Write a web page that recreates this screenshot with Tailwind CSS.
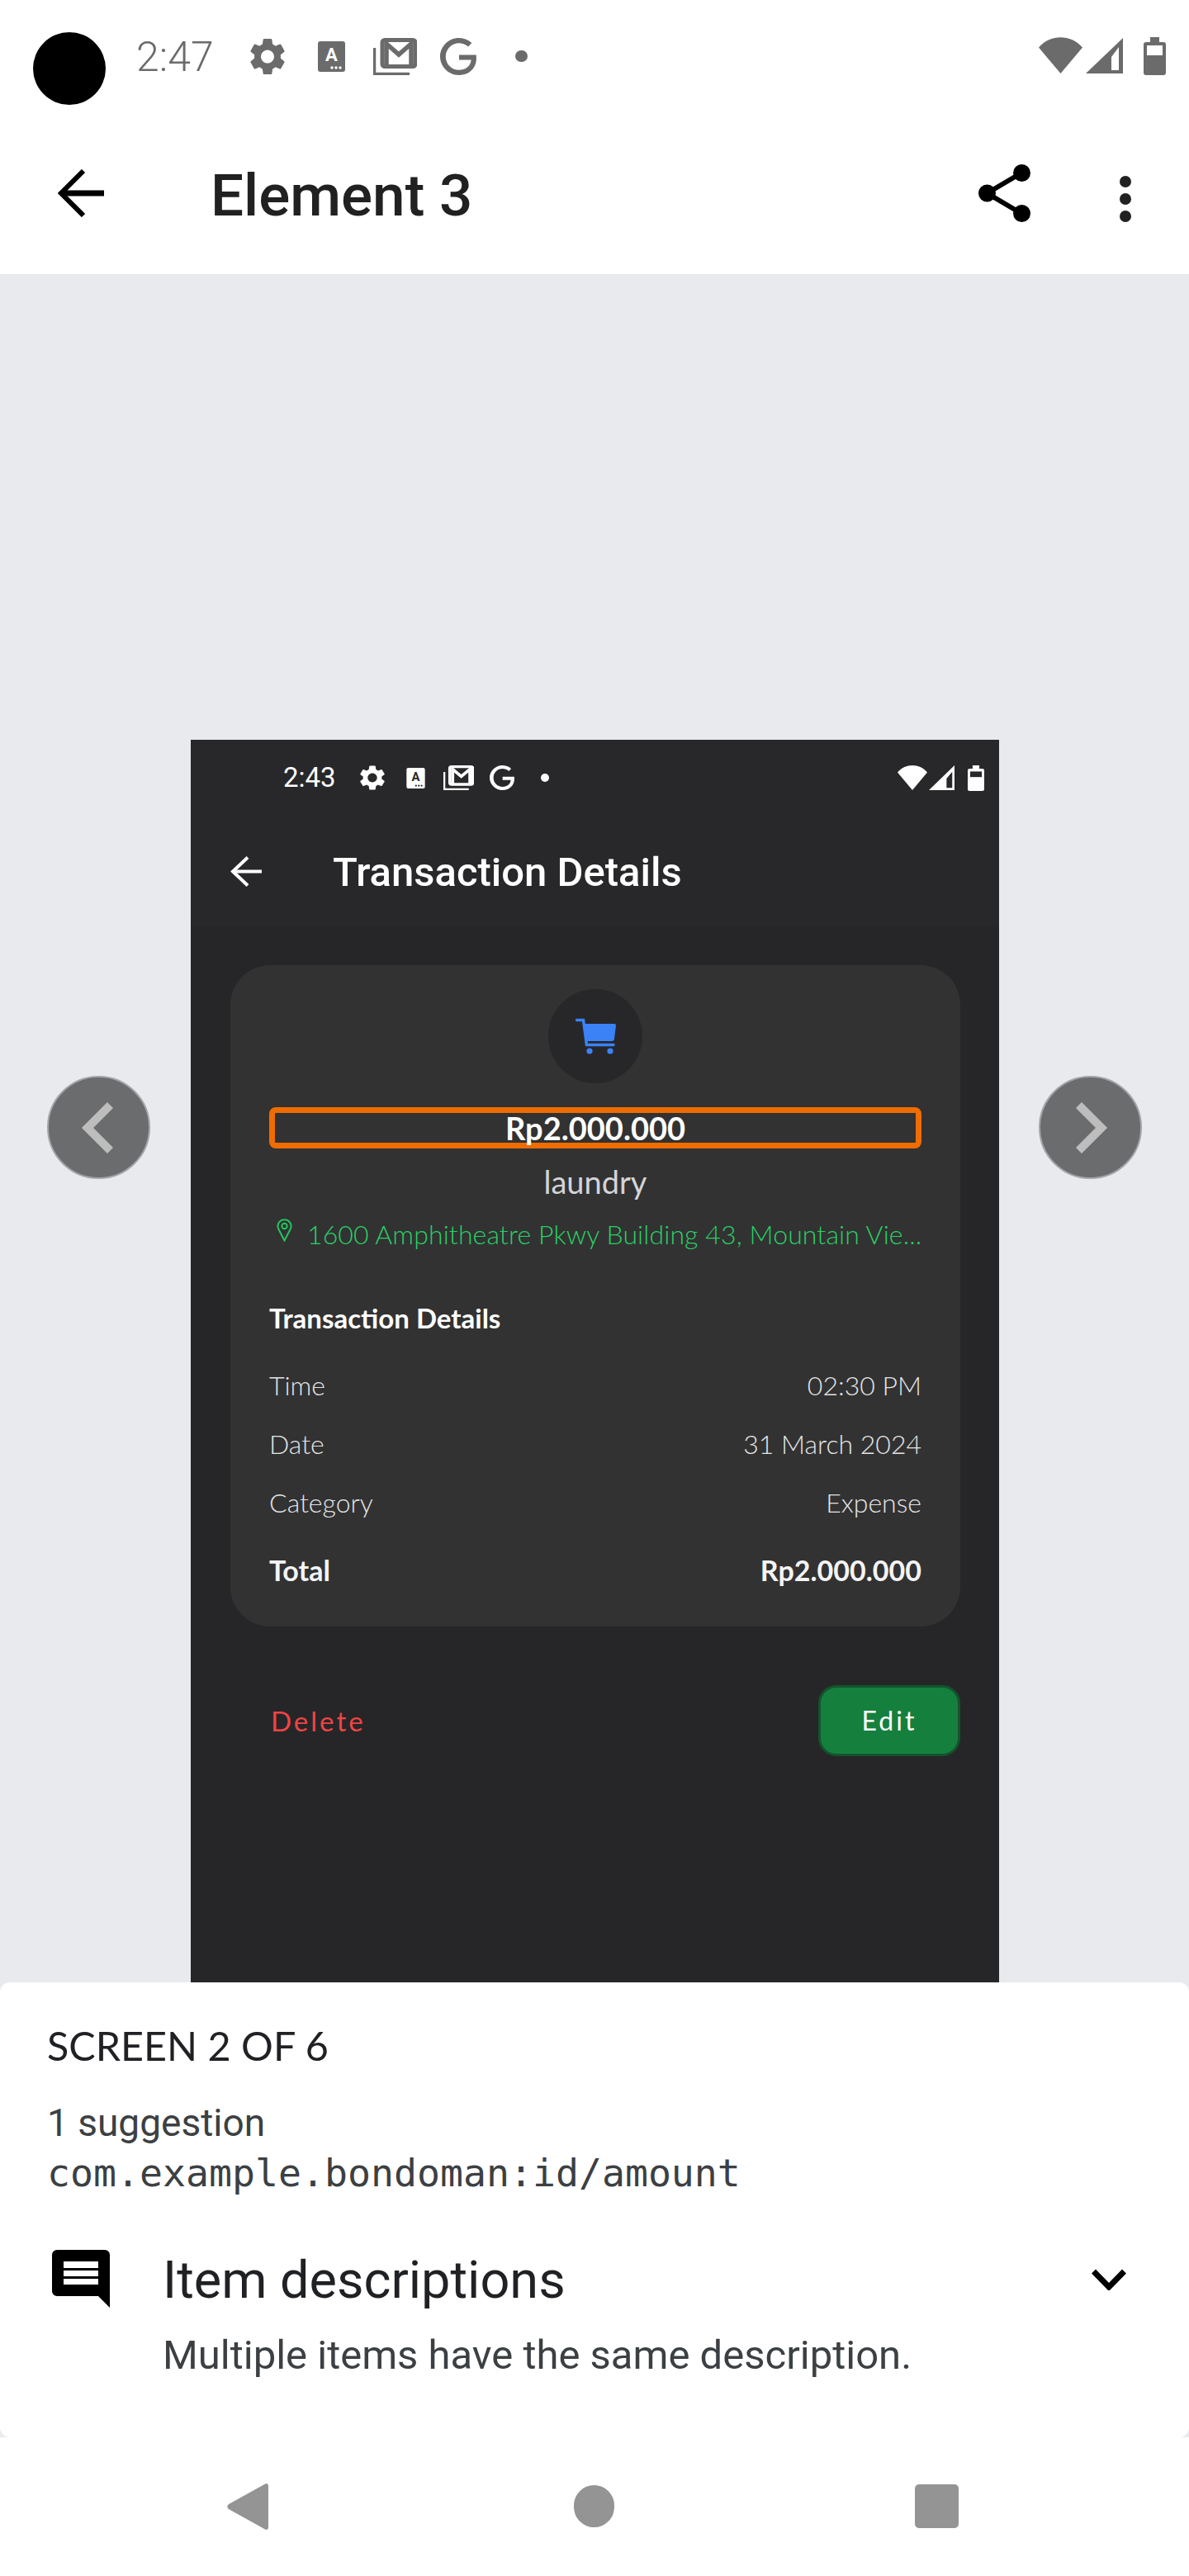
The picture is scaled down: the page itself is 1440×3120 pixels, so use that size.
<!DOCTYPE html>
<html lang="en">
<head>
<meta charset="utf-8">
<title>Element 3</title>
<script src="https://cdn.jsdelivr.net/npm/@tailwindcss/browser@4"></script>
</head>
<body class="m-0 bg-white">
<div class="w-[1440px] h-[3120px] flex flex-col overflow-hidden bg-white font-[Roboto,sans-serif]">

  <!-- Device status bar -->
  <header class="h-[332px] shrink-0 flex flex-col bg-white">
    <div class="h-[127px] flex items-start pl-[40px] pr-[28px]">
      <div class="w-[88px] h-[88px] mt-[39px] rounded-full bg-black"></div>
      <span class="ml-[37px] mt-[41px] text-[50px] leading-[56px] font-light text-[#6b6b6b]">2:47</span>
      <svg class="ml-[44px] mt-[46px] w-[42px] h-[45px]" viewBox="2.5 2 19 20" preserveAspectRatio="none" fill="#6b6b6b"><path d="M19.14 12.94c.04-.3.06-.61.06-.94 0-.32-.02-.64-.07-.94l2.03-1.58c.18-.14.23-.41.12-.61l-1.92-3.32c-.12-.22-.37-.29-.59-.22l-2.39.96c-.5-.38-1.03-.7-1.62-.94l-.36-2.54c-.04-.24-.24-.41-.48-.41h-3.84c-.24 0-.43.17-.47.41l-.36 2.54c-.59.24-1.13.57-1.62.94l-2.39-.96c-.22-.08-.47 0-.59.22L2.74 8.87c-.12.21-.08.47.12.61l2.03 1.58c-.05.3-.09.63-.09.94s.02.64.07.94l-2.03 1.58c-.18.14-.23.41-.12.61l1.92 3.32c.12.22.37.29.59.22l2.39-.96c.5.38 1.03.7 1.62.94l.36 2.54c.05.24.24.41.48.41h3.84c.24 0 .44-.17.47-.41l.36-2.54c.59-.24 1.13-.56 1.62-.94l2.39.96c.22.08.47 0 .59-.22l1.92-3.32c.12-.22.07-.47-.12-.61l-2.01-1.58zM12 15.6c-1.98 0-3.6-1.62-3.6-3.6s1.62-3.6 3.6-3.6 3.6 1.62 3.6 3.6-1.62 3.6-3.6 3.6z"/></svg>
      <svg class="ml-[40px] mt-[50px] w-[33px] h-[37px]" viewBox="0 0 33 37"><rect width="33" height="37" rx="3" fill="#6b6b6b"/><text x="16.500" y="24" text-anchor="middle" font-family="Roboto" font-weight="700" font-size="22" fill="#fff">A</text><circle cx="17" cy="32" r="1.700" fill="#fff"/><circle cx="22" cy="32" r="1.700" fill="#fff"/><circle cx="27" cy="32" r="1.700" fill="#fff"/></svg>
      <svg class="ml-[34px] mt-[46px] w-[53px] h-[45px]" viewBox="0 0 53 45" fill="none" stroke="#6b6b6b"><path d="M1.500 12V43.500H44" stroke-width="3.500"/><rect x="11" y="2.500" width="40" height="32" rx="3" stroke-width="5"/><path d="M16 33V7L31 20L46 7V33" stroke-width="5.500"/></svg>
      <svg class="ml-[28px] mt-[46px] w-[44px] h-[45px]" viewBox="2 2 19.500 20" preserveAspectRatio="none" fill="#6b6b6b"><path d="M21.350 11.100h-9.170v2.730h6.510c-.33 3.810-3.500 5.440-6.500 5.440C8.360 19.270 5 16.250 5 12c0-4.100 3.200-7.270 7.200-7.270 3.090 0 4.900 1.970 4.900 1.970L19 4.720S16.560 2 12.100 2C6.420 2 2 6.800 2 12c0 5.050 4.130 10 10.220 10 5.350 0 9.250-3.670 9.250-9.090 0-1.150-.12-1.810-.12-1.810z"/></svg>
      <div class="ml-[47px] mt-[61px] w-[15px] h-[14px] rounded-full bg-[#6b6b6b]"></div>
      <svg class="ml-auto mt-[45px] w-[53px] h-[44px]" viewBox="0 0 53 44" fill="#6b6b6b"><path d="M0 12.500C14-4 39-4 53 12.500L26.500 44Z"/></svg>
      <svg class="ml-[4px] mt-[46px] w-[45px] h-[43px]" viewBox="0 0 45 43"><path d="M45 0V43H0Z" fill="#6b6b6b"/><path d="M31 39H40V11L31 23Z" fill="#fff"/></svg>
      <svg class="ml-[25px] mt-[45px] w-[27px] h-[46px]" viewBox="0 0 27 46"><path d="M8 0H19V6H24A3 3 0 0 1 27 9V43A3 3 0 0 1 24 46H3A3 3 0 0 1 0 43V9A3 3 0 0 1 3 6H8Z" fill="#6b6b6b"/><rect x="4" y="10" width="19" height="12" fill="#fff"/></svg>
    </div>
    <!-- Toolbar -->
    <div class="h-[205px] flex items-start pl-[70px] pr-[70px]">
      <svg class="mt-[78px] w-[56px] h-[58px]" viewBox="0 0 56 58" fill="none" stroke="#000" stroke-width="7"><path d="M56 29H5"/><path d="M31 2L4 29L31 56" stroke-width="6"/></svg>
      <h1 class="ml-[129px] mt-[71px] text-[71px] leading-[78px] font-medium text-[#212121]">Element 3</h1>
      <svg class="ml-auto mt-[72px] w-[63px] h-[70px]" viewBox="0 0 63 70" fill="#000" stroke="#000"><path d="M52 10.500L10.500 35L52 59.500" fill="none" stroke-width="6"/><ellipse cx="10.500" cy="35" rx="10.500" ry="10.500" stroke="none"/><ellipse cx="52.500" cy="10.500" rx="10.500" ry="10.500" stroke="none"/><ellipse cx="52.500" cy="59.500" rx="10.500" ry="10.500" stroke="none"/></svg>
      <div class="ml-[108px] mt-[86px] flex flex-col gap-[7px]">
        <div class="w-[14px] h-[14px] rounded-full bg-[#212121]"></div>
        <div class="w-[14px] h-[14px] rounded-full bg-[#212121]"></div>
        <div class="w-[14px] h-[14px] rounded-full bg-[#212121]"></div>
      </div>
    </div>
  </header>

  <div class="flex-1 min-h-0 flex flex-col bg-[#e8eaed]">
    <!-- Preview row -->
    <main class="h-[2069px] shrink-0 flex items-start pl-[57px] overflow-hidden">
      <button class="w-[125px] h-[125px] mt-[971px] shrink-0 flex items-center justify-center rounded-full border-2 border-[#a2a5a9] bg-[#6b6c6e]">
        <svg class="mr-[4px] w-[39px] h-[62px]" viewBox="0 0 39 62" fill="none" stroke="#bdbdbd" stroke-width="10"><path d="M35.500 3.500L8 31L35.500 58.500"/></svg>
      </button>

      <section class="w-[979px] h-[1505px] mt-[564px] ml-[49px] shrink-0 flex flex-col bg-[#262628] font-[Lato,sans-serif]">
        <!-- Inner status + app bar -->
        <div class="h-[226px] shrink-0 flex flex-col bg-[#28282a]">
          <div class="h-[72px] flex items-start pl-[112px] pr-[18px] font-[Roboto,sans-serif]">
            <span class="mt-[27px] text-[33px] leading-[38px] text-white">2:43</span>
            <svg class="ml-[29px] mt-[31px] w-[30px] h-[30px]" viewBox="2.500 2 19 20" preserveAspectRatio="none" fill="#fff"><path d="M19.140 12.940c.04-.3.06-.61.06-.94 0-.32-.02-.64-.07-.94l2.030-1.580c.18-.14.23-.41.12-.61l-1.920-3.320c-.12-.22-.37-.29-.59-.22l-2.390.96c-.5-.38-1.030-.7-1.620-.94l-.36-2.540c-.04-.24-.24-.41-.48-.41h-3.840c-.24 0-.43.17-.47.41l-.36 2.540c-.59.24-1.130.57-1.620.94l-2.390-.96c-.22-.08-.47 0-.59.22L2.740 8.870c-.12.21-.08.47.12.61l2.030 1.580c-.05.3-.09.63-.09.94s.02.64.07.94l-2.030 1.580c-.18.14-.23.41-.12.61l1.920 3.320c.12.22.37.29.59.22l2.390-.96c.5.38 1.030.7 1.620.94l.36 2.54c.05.24.24.41.48.41h3.840c.24 0 .44-.17.47-.41l.36-2.540c.59-.24 1.130-.56 1.620-.94l2.390.96c.22.08.47 0 .59-.22l1.920-3.320c.12-.22.07-.47-.12-.61l-2.010-1.580zM12 15.600c-1.980 0-3.600-1.620-3.600-3.600s1.620-3.600 3.600-3.600 3.600 1.620 3.600 3.600-1.620 3.600-3.600 3.600z"/></svg>
            <svg class="ml-[26px] mt-[34px] w-[23px] h-[25px]" viewBox="0 0 33 37"><rect width="33" height="37" rx="3" fill="#fff"/><text x="16.500" y="24" text-anchor="middle" font-family="Roboto" font-weight="700" font-size="22" fill="#28282a">A</text><circle cx="17" cy="32" r="1.700" fill="#28282a"/><circle cx="22" cy="32" r="1.700" fill="#28282a"/><circle cx="27" cy="32" r="1.700" fill="#28282a"/></svg>
            <svg class="ml-[22px] mt-[31px] w-[37px] h-[30px]" viewBox="0 0 53 45" preserveAspectRatio="none" fill="none" stroke="#fff"><path d="M1.500 12V43.500H44" stroke-width="3.500"/><rect x="11" y="2.500" width="40" height="32" rx="3" stroke-width="5"/><path d="M16 33V7L31 20L46 7V33" stroke-width="5.500"/></svg>
            <svg class="ml-[19px] mt-[31px] w-[30px] h-[30px]" viewBox="2 2 19.500 20" preserveAspectRatio="none" fill="#fff"><path d="M21.350 11.100h-9.170v2.730h6.510c-.33 3.810-3.500 5.440-6.500 5.440C8.360 19.270 5 16.250 5 12c0-4.100 3.200-7.270 7.200-7.270 3.090 0 4.900 1.970 4.900 1.970L19 4.720S16.560 2 12.100 2C6.420 2 2 6.800 2 12c0 5.050 4.130 10 10.220 10 5.350 0 9.250-3.670 9.250-9.090 0-1.150-.12-1.810-.12-1.810z"/></svg>
            <div class="ml-[32px] mt-[41px] w-[10px] h-[10px] rounded-full bg-white"></div>
            <svg class="ml-auto mt-[31px] w-[36px] h-[30px]" viewBox="0 0 53 44" preserveAspectRatio="none" fill="#fff"><path d="M0 12.500C14-4 39-4 53 12.500L26.500 44Z"/></svg>
            <svg class="ml-[2px] mt-[31px] w-[31px] h-[30px]" viewBox="0 0 45 43" preserveAspectRatio="none"><path d="M45 0V43H0Z" fill="#fff"/><path d="M31 39H41V11L31 23Z" fill="#28282a"/></svg>
            <svg class="ml-[16px] mt-[31px] w-[20px] h-[31px]" viewBox="0 0 27 46" preserveAspectRatio="none"><path d="M8 0H19V6H24A3 3 0 0 1 27 9V43A3 3 0 0 1 24 46H3A3 3 0 0 1 0 43V9A3 3 0 0 1 3 6H8Z" fill="#fff"/><rect x="4" y="11" width="19" height="10" fill="#28282a"/></svg>
          </div>
          <div class="flex items-start pl-[48px] font-[Roboto,sans-serif]">
            <svg class="mt-[69px] w-[38px] h-[37px]" viewBox="0 0 38 37" fill="none" stroke="#fff" stroke-width="4"><path d="M38 18.500H3"/><path d="M21 1.500L3 18.500L21 35.500"/></svg>
            <h2 class="ml-[86px] mt-[62px] text-[49px] leading-[54px] font-medium text-white">Transaction Details</h2>
          </div>
        </div>

        <!-- Card -->
        <div class="w-[884px] h-[801px] ml-[48px] mt-[47px] shrink-0 flex flex-col px-[47px] rounded-[48px] bg-[#323232]">
          <div class="w-[114px] h-[114px] mt-[29px] self-center flex items-center justify-center rounded-full bg-[#27272a]">
            <svg class="w-[49px] h-[44px]" viewBox="0 0 49 44"><path d="M1.500 2.500H9.500L13.500 32.500H46" fill="none" stroke="#3b82f6" stroke-width="3.500" stroke-linecap="round"/><path d="M10 7H47A2 2 0 0 1 49 9L47 25A3 3 0 0 1 44 28H13Z" fill="#3b82f6"/><circle cx="17" cy="40" r="3.600" fill="#3b82f6"/><circle cx="42" cy="40" r="3.600" fill="#3b82f6"/></svg>
          </div>
          <div class="w-[790px] h-[50px] mt-[29px] flex items-center justify-center rounded-[8px] border-[7px] border-[#ef6c00] text-[38px] leading-[36px] font-bold text-white">Rp2.000.000</div>
          <p class="mt-[18px] text-center text-[38px] leading-[44px] text-[#d4d4d8]">laundry</p>
          <div class="mt-[22px] flex items-start">
            <svg class="ml-[9px] mt-[1px] w-[19px] h-[28px] shrink-0" viewBox="0 0 19 28" fill="none" stroke="#22c55e" stroke-width="2"><path d="M9.500 26.500L2.500 13A8 8 0 1 1 16.500 13Z"/><circle cx="9.500" cy="9" r="3.200"/></svg>
            <p class="ml-[18px] whitespace-nowrap text-[32px] leading-[40px] tracking-[0.1px] font-light text-[#28d066]">1600 Amphitheatre Pkwy Building 43, Mountain Vie...</p>
          </div>
          <h3 class="mt-[62px] text-[33px] leading-[38px] font-bold text-white">Transaction Details</h3>
          <div class="mt-[44px] flex justify-between text-[32px] leading-[38px] font-light text-[#e4e4e7]"><span>Time</span><span>02:30 PM</span></div>
          <div class="mt-[33px] flex justify-between text-[32px] leading-[38px] font-light text-[#e4e4e7]"><span>Date</span><span>31 March 2024</span></div>
          <div class="mt-[33px] flex justify-between text-[32px] leading-[38px] font-light text-[#e4e4e7]"><span>Category</span><span>Expense</span></div>
          <div class="mt-[44px] flex justify-between text-[34px] leading-[38px] font-bold text-[#f4f4f5]"><span>Total</span><span>Rp2.000.000</span></div>
        </div>

        <!-- Actions -->
        <div class="w-[884px] ml-[48px] mt-[71px] flex items-center justify-between">
          <span class="ml-[49px] text-[33px] leading-[38px] tracking-[3px] text-[#ef4444]">Delete</span>
          <button class="w-[172px] h-[86px] flex items-center justify-center rounded-[22px] border-[3px] border-[#14532d] bg-[#15803d] text-[32px] leading-[38px] tracking-[3px] text-white">Edit</button>
        </div>
      </section>

      <button class="w-[125px] h-[125px] mt-[971px] ml-[48px] shrink-0 flex items-center justify-center rounded-full border-2 border-[#a2a5a9] bg-[#6b6c6e]">
        <svg class="ml-[4px] w-[39px] h-[62px]" viewBox="0 0 39 62" fill="none" stroke="#bdbdbd" stroke-width="10"><path d="M3.500 3.500L31 31L3.500 58.500"/></svg>
      </button>
    </main>

    <!-- Bottom sheet -->
    <section class="flex-1 flex flex-col rounded-[12px] bg-white pl-[57px] pr-[76px]">
      <p class="mt-[48px] text-[48.500px] leading-[56px] font-[Lato,sans-serif] text-[#202124]">SCREEN 2 OF 6</p>
      <p class="mt-[40px] text-[46px] leading-[52px] text-[#3c4043]">1 suggestion</p>
      <p class="mt-[8px] text-[46.500px] leading-[54px] font-['DejaVu_Sans_Mono',monospace] text-[#3c4043]">com.example.bondoman:id/amount</p>
      <div class="mt-[66px] flex items-start">
        <svg class="ml-[6px] w-[70px] h-[70px] shrink-0" viewBox="0 0 70 70"><path d="M6 0H64A6 6 0 0 1 70 6V70L56 56H6A6 6 0 0 1 0 50V6A6 6 0 0 1 6 0Z" fill="#000"/><rect x="14" y="14" width="42" height="8" fill="#fff"/><rect x="14" y="25" width="42" height="7" fill="#fff"/><rect x="14" y="35" width="42" height="7" fill="#fff"/></svg>
        <div class="ml-[64px] mt-[2px] flex-1">
          <p class="text-[63px] leading-[70px] text-[#202124]">Item descriptions</p>
          <p class="mt-[28px] text-[49px] leading-[56px] text-[#3c4043]">Multiple items have the same description.</p>
        </div>
        <svg class="mt-[23px] w-[42px] h-[26px] shrink-0" viewBox="0 0 42 26" fill="none" stroke="#000" stroke-width="7"><path d="M2.500 3L21 22L39.500 3"/></svg>
      </div>
    </section>

    <!-- Nav bar -->
    <nav class="h-[168px] shrink-0 flex items-start bg-white pl-[275px]">
      <svg class="mt-[56px] w-[50px] h-[56px]" viewBox="0 0 50 56" fill="#949494"><path d="M47 0A3 3 0 0 1 50 3V53A3 3 0 0 1 47 56L2 31A3.500 3.500 0 0 1 2 25Z"/></svg>
      <div class="ml-[370px] mt-[58px] w-[49px] h-[51px] rounded-full bg-[#949494]"></div>
      <div class="ml-[364px] mt-[57px] w-[53px] h-[53px] rounded-[5px] bg-[#949494]"></div>
    </nav>
  </div>
</div>
</body>
</html>
